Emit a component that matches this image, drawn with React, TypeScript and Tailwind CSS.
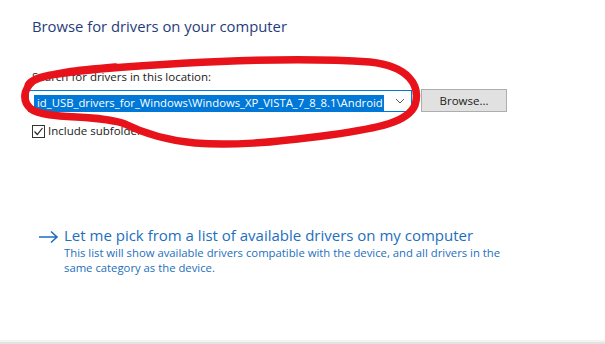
import React from "react";

const font = { fontFamily: '"Open Sans", "Noto Sans", sans-serif' };

export default function App() {
  return (
    <div
      className="relative w-[605px] h-[344px] bg-white overflow-hidden flex flex-col"
      style={font}
    >
      <div className="flex-1 flex flex-col pl-[32px]">
        <h1 className="mt-[15px] text-[14.8px] leading-[22px] text-[#1f3d7a] font-normal">
          Browse for drivers on your computer
        </h1>
        <div className="mt-[32px] text-[11.5px] leading-[16px] text-[#1a1a1a]">
          Search for drivers in this location:
        </div>
        <div className="mt-[4px] -ml-[4px] flex items-center gap-[9px]">
          <div className="w-[384px] h-[22px] border border-[#0078d7] flex items-center pl-[5px] pr-[6px]">
            <div className="flex-1 overflow-hidden">
              <span className="bg-[#0078d7] text-white text-[11.3px] leading-[16px] inline-block pl-[3px] pr-[1px] whitespace-nowrap">
                id_USB_drivers_for_Windows\Windows_XP_VISTA_7_8_8.1\Android
              </span>
            </div>
            <svg width="10" height="6" viewBox="0 0 10 6" className="ml-[4px]">
              <path d="M1 1 L5 5 L9 1" fill="none" stroke="#5a5a5a" strokeWidth="1" />
            </svg>
          </div>
          <button className="w-[86px] h-[23px] bg-[#e1e1e1] border border-[#adadad] text-[11.5px] text-[#1a1a1a] leading-none">
            Browse...
          </button>
        </div>
        <div className="mt-[11px] flex items-center gap-[3px]">
          <div className="w-[13px] h-[13px] border border-[#333] flex items-center justify-center bg-white">
            <svg width="11" height="11" viewBox="0 0 11 11">
              <path d="M1.5 5.5 L4.3 8.5 L9.5 2" fill="none" stroke="#222" strokeWidth="1.2" />
            </svg>
          </div>
          <span className="text-[11.5px] leading-[16px] text-[#1a1a1a]">Include subfolders</span>
        </div>

        <div className="mt-[86px] flex items-start">
          <svg width="22" height="14" viewBox="0 0 22 14" className="ml-[6px] mt-[5px]">
            <path d="M1 7 H19 M13 1.5 L19 7 L13 12.5" fill="none" stroke="#1c6fbd" strokeWidth="1.6" />
          </svg>
          <div className="ml-[4px] flex flex-col">
            <div className="text-[15px] leading-[20px] text-[#1c6fbd]">
              Let me pick from a list of available drivers on my computer
            </div>
            <div className="text-[11.3px] leading-[15px] text-[#1c6fbd] w-[450px]">
              This list will show available drivers compatible with the device, and all drivers in the
              same category as the device.
            </div>
          </div>
        </div>
      </div>
      <div className="h-[2px] bg-[#f3f3f3]" />
      <div className="h-[2px] bg-[#e3e3e3]" />

      <svg
        className="absolute left-0 top-0 pointer-events-none"
        width="605"
        height="344"
        viewBox="0 0 605 344"
      >
        <path
          d="M28 86 C30 76 60 73 100 69 C200 61 300 57 370 62 C408 66 421 85 415 105 C408 122 380 128 330 135 C270 143 230 146 195 143 C165 140 145 134 125 124 C100 114 45 120 31 109 C22 101 23 90 33 81 C48 73 80 70 115 67"
          fill="none"
          stroke="#e8121a"
          strokeWidth="7.5"
          strokeLinecap="round"
          strokeLinejoin="round"
        />
      </svg>
    </div>
  );
}
